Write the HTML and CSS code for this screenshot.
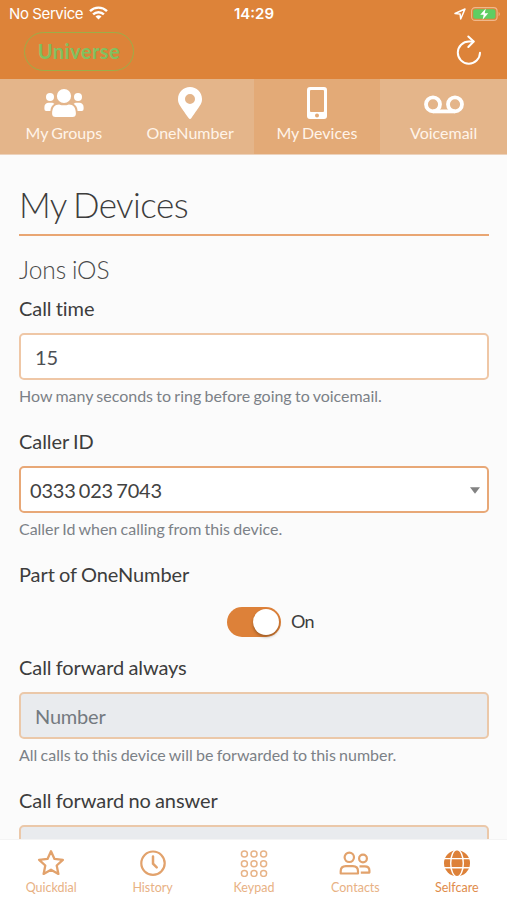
FILE: index.html
```html
<!DOCTYPE html>
<html lang="en">
<head>
<meta charset="utf-8">
<title>My Devices</title>
<link rel="stylesheet" href="styles.css">
</head>
<body>
<div class="app">
  <header class="header">
    <div class="status">
      <div class="status-left"><span>No Service</span>
        <svg width="19" height="14" viewBox="0 0 19 14"><g fill="none" stroke="#fff" stroke-width="2.4"><path d="M1 5.1a12.2 12.2 0 0 1 17 0"/><path d="M4.1 8.4a7.7 7.7 0 0 1 10.8 0"/></g><path d="M6.5 10.6a4.3 4.3 0 0 1 6 0l-3 3z" fill="#fff"/></svg>
      </div>
      <span class="clock">14:29</span>
      <div class="status-right">
        <svg width="12" height="12" viewBox="0 0 12 12"><path d="M1 5.5 11 1 6.7 11 6.1 6z" fill="none" stroke="#fff" stroke-width="1.5" stroke-linejoin="round"/></svg>
        <svg width="30" height="14" viewBox="0 0 30 14"><rect x=".6" y=".6" width="25.5" height="12.8" rx="3.5" fill="none" stroke="#f0b88c" stroke-width="1.1"/><rect x="2.2" y="2.2" width="22.3" height="9.6" rx="2" fill="#5fce62"/><path d="M14.8 1.5 9.2 7.7h3.5l-1.1 5 5.6-6.4h-3.5z" fill="#fff"/><path d="M27.6 4.7q2.4 2.3 0 4.6z" fill="#f0b88c"/></svg>
      </div>
    </div>
    <div class="titlebar">
      <span class="brand">Universe</span>
      <svg class="refresh" width="26" height="31" viewBox="0 0 26 31"><g fill="none" stroke="#fff" stroke-width="2" stroke-linecap="round" stroke-linejoin="round"><path d="M24 17.8a11.1 11.1 0 1 1-11-11.3h4.5"/><path d="m12.3 1.5 5.4 5-5.4 5.5"/></g></svg>
    </div>
  </header>
  <nav class="tabs">
    <a class="tab"><svg width="40" height="32" viewBox="0 0 40 32"><g fill="#fff"><circle cx="20" cy="9" r="7.1"/><circle cx="6" cy="10" r="4"/><circle cx="34" cy="10" r="4"/><path d="M8.1 26.5c0-6 2.7-9.1 7-9.1 3.2 1.2 6.6 1.2 9.8 0 4.3 0 7 3.1 7 9.1q0 3.5-3.4 3.5h-17q-3.4 0-3.4-3.5z"/><path d="M.4 22v-1.9c0-2.7 1.8-4.4 4.3-4.4h2.6c1.3 0 2.4.4 3.1 1.1C7.8 18.5 6.6 20.8 6.4 24H2.2Q.4 24 .4 22zM39.6 22v-1.9c0-2.7-1.8-4.4-4.3-4.4h-2.6c-1.3 0-2.4.4-3.1 1.1 2.6 1.7 3.8 4 4 7.2h4.2q1.8 0 1.8-2z"/></g></svg><span>My Groups</span></a>
    <a class="tab"><svg width="24" height="32" viewBox="0 0 384 512"><path fill="#fff" d="M172.3 501.7C27 291 0 269.400 0 192 0 86 86 0 192 0s192 86 192 192c0 77.400-27 99-172.300 309.700-9.500 13.800-29.900 13.800-39.400 0zM192 272a80 80 0 1 0 0-160 80 80 0 0 0 0 160z"/></svg><span>OneNumber</span></a>
    <a class="tab tab-active"><svg width="20" height="32" viewBox="0 0 20 32"><path fill="#fff" fill-rule="evenodd" d="M3 0h14q3 0 3 3v26q0 3-3 3H3q-3 0-3-3V3q0-3 3-3zm1 3q-1 0-1 1v20q0 1 1 1h12q1 0 1-1V4q0-1-1-1zm6 23.600a2 2 0 1 0 0 4 2 2 0 0 0 0-4z"/></svg><span>My Devices</span></a>
    <a class="tab"><svg width="40" height="32" viewBox="0 0 40 32"><g fill="none" stroke="#fff" stroke-width="3.8"><circle cx="9" cy="17.300" r="7"/><circle cx="31" cy="17.300" r="7"/><path d="M9 24.400h22"/></g></svg><span>Voicemail</span></a>
  </nav>
  <main class="content">
    <h1 class="title">My Devices</h1>
    <h2 class="device">Jons iOS</h2>
    <section class="group">
      <div class="label">Call time</div>
      <div class="field">15</div>
      <div class="help">How many seconds to ring before going to voicemail.</div>
    </section>
    <section class="group">
      <div class="label">Caller ID</div>
      <div class="field field-select"><span>0333 023 7043</span><svg width="10" height="7" viewBox="0 0 10 7"><path d="M0 .3h10L5 6.700z" fill="#828282"/></svg></div>
      <div class="help">Caller Id when calling from this device.</div>
    </section>
    <section class="group group-switch">
      <div class="label">Part of OneNumber</div>
      <div class="switch-row"><span class="switch"><span class="knob"></span></span><span class="on">On</span></div>
    </section>
    <section class="group">
      <div class="label">Call forward always</div>
      <div class="field field-disabled">Number</div>
      <div class="help">All calls to this device will be forwarded to this number.</div>
    </section>
    <section class="group">
      <div class="label">Call forward no answer</div>
      <div class="field field-disabled"></div>
    </section>
  </main>
  <footer class="bottom">
    <a class="item"><svg width="28" height="28" viewBox="0 0 28 28"><path d="m14 2.200 3.500 7.700 8.400.9-6.200 5.700 1.700 8.400-7.400-4.200-7.400 4.200 1.700-8.400-6.200-5.700 8.400-.9z" fill="none" stroke="#e2a26c" stroke-width="2.300" stroke-linejoin="round"/></svg><span>Quickdial</span></a>
    <a class="item"><svg width="28" height="28" viewBox="0 0 28 28"><g fill="none" stroke="#e2a26c" stroke-width="2.200"><circle cx="14" cy="14.200" r="11.700"/><path d="M14 7.500v7.200l3.700 3.600" stroke-width="2.500" stroke-linecap="round"/></g></svg><span>History</span></a>
    <a class="item"><svg width="28" height="28" viewBox="0 0 28 28"><g fill="none" stroke="#e7b387" stroke-width="1.500"><circle cx="4.400" cy="5" r="3"/><circle cx="14" cy="5" r="3"/><circle cx="23.600" cy="5" r="3"/><circle cx="4.400" cy="14.700" r="3"/><circle cx="14" cy="14.700" r="3"/><circle cx="23.600" cy="14.700" r="3"/><circle cx="4.400" cy="24.400" r="3"/><circle cx="14" cy="24.400" r="3"/><circle cx="23.600" cy="24.400" r="3"/></g></svg><span>Keypad</span></a>
    <a class="item"><svg width="32" height="28" viewBox="0 0 32 28"><g fill="none" stroke="#e2a26c" stroke-width="2.200" stroke-linejoin="round"><circle cx="10.300" cy="8.300" r="4.700"/><circle cx="24" cy="9.500" r="3.900"/><path d="M1.700 24.500v-2.300c0-3.200 2-5 5.200-5h6.900c3.200 0 5.200 1.800 5.200 5v2.300zM20.500 17.400h5.200c2.900 0 4.700 1.500 4.700 4.200v2h-8.600"/></g></svg><span>Contacts</span></a>
    <a class="item item-active"><svg width="28" height="28" viewBox="0 0 28 28"><circle cx="14" cy="14.200" r="13" fill="#dd8139"/><g fill="none" stroke="#fff" stroke-width="1.400"><ellipse cx="14" cy="14.200" rx="6.300" ry="13.600"/><path d="M.5 9.600h27M.5 18.800h27"/></g></svg><span>Selfcare</span></a>
  </footer>
</div>
</body>
</html>
```

FILE: styles.css
```css
* { box-sizing: border-box; }
body { margin: 0; background: #fbfbfb; font-family: Lato, sans-serif; color: #3d3d3d; font-variant-ligatures: none; }
svg { display: block; flex: none; }
.app { height: 900px; display: flex; flex-direction: column; overflow: hidden; }
.header { flex: none; height: 79px; background: #dd8339; color: #fff; }
.status { height: 28px; display: grid; grid-template-columns: 1fr auto 1fr; align-items: center; padding: 0 8px 0 9px; font: 15px/28px Inter, sans-serif; }
.status-left { display: flex; align-items: center; gap: 6px; letter-spacing: -.4px; }
.status-left svg { margin-top: -3px; }
.clock { font-weight: 600; }
.status-right { display: flex; align-items: center; justify-content: flex-end; gap: 5px; margin: -1px -2px 0 0; }
.titlebar { display: flex; align-items: flex-start; justify-content: space-between; padding: 4px 25px 0 24px; }
.brand { width: 110px; height: 39px; border: 1.500px solid #9cae48; border-radius: 20px; color: #80c160; font-size: 20px; font-weight: 700; line-height: 37px; text-align: center; letter-spacing: .45px; }
.refresh { margin-top: 3px; }
.tabs { flex: none; height: 76px; display: grid; grid-template-columns: repeat(4, 1fr); background: #e4b58a; border-bottom: 1px solid #ecd2bc; }
.tab { display: flex; flex-direction: column; align-items: center; padding-top: 8px; color: #fff4e9; font-size: 16px; line-height: 22px; word-spacing: -1px; }
.tab:first-child { padding-left: 1px; }
.tab span { margin-top: 3px; }
.tab-active { background: #e3aa77; }
.content { flex: 1; min-height: 0; overflow: hidden; padding: 24px 18px 0 19px; }
.title { margin: 0; height: 57px; border-bottom: 2px solid #e9a673; font-size: 35px; line-height: 50px; font-weight: 300; letter-spacing: -.55px; word-spacing: -2px; }
.device { margin: 18px 0 9px; font-size: 24.500px; line-height: 32px; font-weight: 300; color: #4a4a4a; word-spacing: -1px; }
.group { height: 133px; }
.group-switch { height: 93px; }
.label { font-size: 20px; line-height: 27px; letter-spacing: -.07px; word-spacing: -.8px; }
.field { margin-top: 11px; height: 47px; border: 2px solid #efc7a6; border-radius: 5px; background: #fff; padding: 0 15px 0 14px; font-size: 20px; line-height: 44px; color: #4d5054; letter-spacing: -.2px; }
.field-select { display: flex; align-items: center; justify-content: space-between; border-color: #e8a877; padding: 1px 7px 0 9px; color: #424242; word-spacing: -1.700px; }
.field-disabled { background: #e9ebee; border-color: #ebc8a9; color: #747a80; }
.help { margin-top: 5px; font-size: 16px; line-height: 22px; color: #7b8187; letter-spacing: -.02px; word-spacing: -.75px; }
.switch-row { display: flex; align-items: center; padding-left: 208px; margin-top: 19px; height: 30px; }
.switch { width: 54px; height: 30px; border-radius: 15px; background: #dd8139; padding: 2px; display: flex; justify-content: flex-end; }
.knob { width: 26px; height: 26px; border-radius: 50%; background: #fff; box-shadow: 0 2px 3px rgba(70, 40, 10, .4); }
.on { margin: -3px 0 0 10px; font-size: 18px; letter-spacing: -.8px; }
.bottom { flex: none; height: 61px; background: #fff; display: grid; grid-template-columns: repeat(5, 1fr); border-top: 1px solid #f4f4f4; }
.item { display: flex; flex-direction: column; align-items: center; padding: 9px 0 0 1px; font-size: 12.500px; line-height: 18px; color: #e8b184; }
.item span { margin-top: 2px; }
.item-active { color: #df8c4b; }
```
